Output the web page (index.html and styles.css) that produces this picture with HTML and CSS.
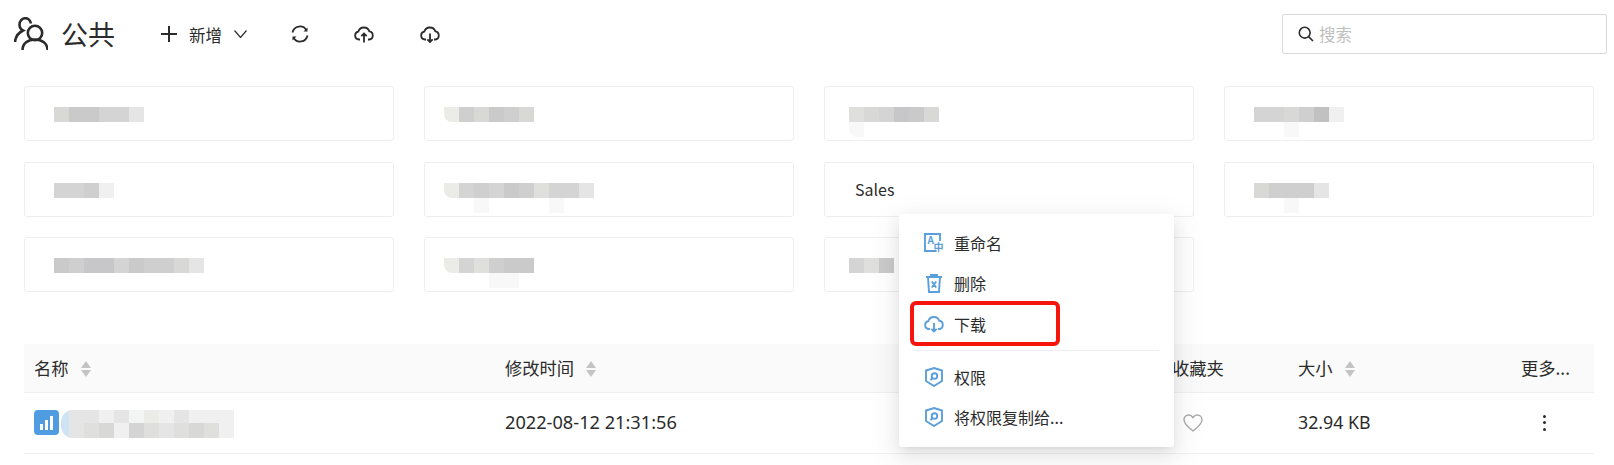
FILE: index.html
```html
<!DOCTYPE html>
<html lang="zh-CN">
<head>
  <meta charset="UTF-8" />
  <meta name="viewport" content="width=device-width, initial-scale=1" />
  <title>公共</title>
  <link rel="stylesheet" href="styles.css">
</head>
<body>

  <header class="toolbar">
    <svg class="space-icon" viewBox="0 0 34 34" fill="none">
      <circle cx="21" cy="16" r="7.2" />
      <path d="M8.5 33c0-6.5 5.5-10.5 12.5-10.5S33.500 26.500 33.500 33" />
      <path d="M17 6.500C16 3 14 1.200 11.500 1.200 8 1.200 5.500 4 5.500 7.500c0 3 1.500 5 3.500 6C5 15.500 1.500 19 1 25" />
    </svg>
    <span class="space-name">公共</span>

    <button class="tool-btn add-btn">
      <svg class="plus-icon" viewBox="0 0 16 16"><path d="M8 0v16M0 8h16" /></svg>
      <span class="add-label">新增</span>
      <svg class="chevron-icon" viewBox="0 0 13 8"><path d="M.5.500 6.500 7.500 12.500.500" /></svg>
    </button>

    <button class="tool-btn refresh-btn">
      <svg class="tool-icon" viewBox="0 0 18 18">
        <path d="M1.500 7.500A7.600 7.600 0 0 1 15.500 5.200" />
        <path d="M16.500 10.500A7.600 7.600 0 0 1 2.500 12.800" />
        <path class="solid" d="M16.500 2.500v4h-4zM1.500 15.500v-4h4z" />
      </svg>
    </button>
    <button class="tool-btn cloud-btn">
      <svg class="cloud-icon" viewBox="0 0 20 17">
        <path d="M6 13.500H5A4 4 0 0 1 4.300 5.600 5.800 5.800 0 0 1 15.300 5.300 4.150 4.150 0 0 1 15.200 13.500H14" />
        <path d="M10 16.500V7.500M7.300 10.200 10 7.500l2.700 2.700" />
      </svg>
    </button>
    <button class="tool-btn cloud-btn">
      <svg class="cloud-icon" viewBox="0 0 20 17">
        <path d="M6 13.500H5A4 4 0 0 1 4.300 5.600 5.800 5.800 0 0 1 15.300 5.300 4.150 4.150 0 0 1 15.200 13.500H14" />
        <path d="M10 7.500v8.500M7.300 13.300 10 16l2.700-2.700" />
      </svg>
    </button>

    <label class="search">
      <svg class="search-icon" viewBox="0 0 16 16"><circle cx="6.700" cy="6.700" r="5.400" /><path d="M10.600 10.600 15 15" /></svg>
      <input type="text" placeholder="搜索">
    </label>
  </header>

  <section class="folders">
    <div class="card">
      <div class="mosaic">
        <div class="px-row"><i class="g6"></i><i class="g3"></i><i class="g3"></i><i class="g5"></i><i class="g5"></i><i class="g8"></i></div>
      </div>
    </div>
    <div class="card">
      <div class="mosaic shift-lg">
        <div class="px-row"><i class="g9 round"></i><i class="g4"></i><i class="g6"></i><i class="g3"></i><i class="g4"></i><i class="g6"></i></div>
      </div>
    </div>
    <div class="card">
      <div class="mosaic shift-sm">
        <div class="px-row"><i class="g7"></i><i class="g6"></i><i class="g5"></i><i class="g2"></i><i class="g3"></i><i class="g6"></i></div>
        <div class="px-row"><i class="g11 round"></i></div>
      </div>
    </div>
    <div class="card">
      <div class="mosaic">
        <div class="px-row"><i class="g5"></i><i class="g5"></i><i class="g6"></i><i class="g4"></i><i class="g1"></i><i class="g10"></i></div>
        <div class="px-row"><i></i><i></i><i class="g11"></i></div>
      </div>
    </div>

    <div class="card">
      <div class="mosaic">
        <div class="px-row"><i class="g5"></i><i class="g5"></i><i class="g4"></i><i class="g10"></i></div>
      </div>
    </div>
    <div class="card">
      <div class="mosaic shift-lg">
        <div class="px-row"><i class="g9 round"></i><i class="g5"></i><i class="g4"></i><i class="g5"></i><i class="g3"></i><i class="g4"></i><i class="g7"></i><i class="g5"></i><i class="g5"></i><i class="g8"></i></div>
        <div class="px-row"><i></i><i></i><i class="g11"></i><i></i><i></i><i></i><i></i><i class="g11"></i></div>
      </div>
    </div>
    <div class="card">
      <span class="card-name">Sales</span>
    </div>
    <div class="card">
      <div class="mosaic">
        <div class="px-row"><i class="g6"></i><i class="g4"></i><i class="g4"></i><i class="g4"></i><i class="g8"></i></div>
        <div class="px-row"><i></i><i></i><i class="g11"></i></div>
      </div>
    </div>

    <div class="card">
      <div class="mosaic">
        <div class="px-row"><i class="g3"></i><i class="g4"></i><i class="g2"></i><i class="g2"></i><i class="g5"></i><i class="g3"></i><i class="g4"></i><i class="g4"></i><i class="g6"></i><i class="g8"></i></div>
      </div>
    </div>
    <div class="card">
      <div class="mosaic shift-lg">
        <div class="px-row"><i class="g9 round"></i><i class="g5"></i><i class="g7"></i><i class="g4"></i><i class="g3"></i><i class="g3"></i></div>
        <div class="px-row"><i></i><i></i><i></i><i class="g11"></i><i class="g11"></i></div>
      </div>
    </div>
    <div class="card">
      <div class="mosaic shift-sm">
        <div class="px-row"><i class="g5"></i><i class="g7"></i><i class="g3"></i></div>
      </div>
    </div>
  </section>

  <table class="files">
    <thead>
      <tr>
        <th class="col-name">名称<span class="sorter"></span></th>
        <th class="col-time">修改时间<span class="sorter"></span></th>
        <th class="col-fav">收藏夹</th>
        <th class="col-size">大小<span class="sorter"></span></th>
        <th class="col-more">更多...</th>
      </tr>
    </thead>
    <tbody>
      <tr>
        <td>
          <div class="file-cell">
            <span class="file-icon">
              <svg viewBox="0 0 25 25"><path d="M6 20v-6h3v6zM11 20V10h3v10zM16 20V6h3v14z" /></svg>
            </span>
            <div class="file-blur">
              <div class="px-row"><i class="g8"></i><i class="g8"></i><i class="g10"></i><i class="g8"></i><i class="g12"></i><i class="g9"></i><i class="g10"></i><i class="g8"></i><i class="g10"></i><i class="g10"></i><i class="g10"></i></div>
              <div class="px-row"><i class="g8"></i><i class="g7"></i><i class="g6"></i><i class="g10"></i><i class="g5"></i><i class="g7"></i><i class="g8"></i><i class="g7"></i><i class="g6"></i><i class="g7"></i><i class="g10"></i></div>
            </div>
          </div>
        </td>
        <td class="cell-time">2022-08-12 21:31:56</td>
        <td>
          <svg class="heart-icon" viewBox="0 0 20 18"><path d="M10 17C4 12.500 1 9.500 1 5.800 1 3 3.200 1 5.700 1 7.500 1 9 2 10 3.500 11 2 12.500 1 14.300 1 16.800 1 19 3 19 5.800 19 9.500 16 12.500 10 17z" /></svg>
        </td>
        <td class="cell-size">32.94 KB</td>
        <td class="more-cell"><span class="dots"><i></i><i></i><i></i></span></td>
      </tr>
    </tbody>
  </table>

  <div class="menu">
    <div class="menu-item">
      <svg class="menu-icon" viewBox="0 0 20 20">
        <path d="M12.500 18H1V1h15v7" />
        <text x="3.500" y="11" class="icon-letter">A</text>
        <text x="9.500" y="18" class="icon-letter">中</text>
      </svg>
      重命名
    </div>
    <div class="menu-item">
      <svg class="menu-icon" viewBox="0 0 20 20">
        <path d="M2 4h16M7 4V2h6v2M4 4l1 15h10l1-15M7.800 8.500l4.400 6M12.200 8.500l-4.400 6" />
      </svg>
      删除
    </div>
    <div class="menu-item menu-marked">
      <svg class="menu-icon" viewBox="0 0 20 17">
        <path d="M6 13.500H5A4 4 0 0 1 4.300 5.600 5.800 5.800 0 0 1 15.300 5.300 4.150 4.150 0 0 1 15.200 13.500H14" />
        <path d="M10 7.500v8.500M7.300 13.300 10 16l2.700-2.700" />
      </svg>
      下载
    </div>
    <div class="menu-divider"></div>
    <div class="menu-item">
      <svg class="menu-icon" viewBox="0 0 18 20">
        <path d="M9 1 17 3.500V14L9 19 1 14V3.500z" />
        <circle cx="9.500" cy="9" r="2.800" />
        <path d="M7.500 11 5.500 13" />
      </svg>
      权限
    </div>
    <div class="menu-item">
      <svg class="menu-icon" viewBox="0 0 18 20">
        <path d="M9 1 17 3.500V14L9 19 1 14V3.500z" />
        <circle cx="9.500" cy="9" r="2.800" />
        <path d="M7.500 11 5.500 13" />
      </svg>
      将权限复制给...
    </div>
  </div>

</body>
</html>
```

FILE: styles.css
```css
* {
  box-sizing: border-box;
}

html, body {
  height: 465px;
  overflow: hidden;
}

body {
  margin: 0;
  background: #fff;
  color: #2b2b2b;
  font-family: "Noto Sans CJK SC", "Noto Sans", sans-serif;
  font-size: 16px;
  position: relative;
}

/* toolbar */
.toolbar {
  display: flex;
  align-items: center;
  height: 68px;
  margin-bottom: 18px;
  padding: 0 7px 0 14px;
}

.space-icon {
  width: 34px;
  height: 34px;
  stroke: #2b2b2b;
  stroke-width: 2.600;
}

.space-name {
  font-size: 27px;
  line-height: 34px;
  margin-left: 13px;
  width: 100px;
}

.tool-btn {
  display: flex;
  align-items: center;
  padding: 0;
  border: none;
  background: none;
  color: inherit;
  font: inherit;
}

.plus-icon {
  width: 16px;
  height: 16px;
  stroke: #2b2b2b;
  stroke-width: 2;
}

.add-label {
  margin-left: 12px;
  font-size: 16.500px;
  line-height: 22px;
  position: relative;
  top: 1px;
}

.chevron-icon {
  width: 13px;
  height: 8px;
  margin-left: 12px;
  fill: none;
  stroke: #2b2b2b;
  stroke-width: 1.200;
}

.refresh-btn {
  margin-left: 44px;
}

.refresh-btn + .cloud-btn {
  margin-left: 45px;
}

.cloud-btn {
  margin-left: 46px;
}

.tool-icon {
  width: 18px;
  height: 18px;
  fill: none;
  stroke: #2b2b2b;
  stroke-width: 1.800;
}

.tool-icon .solid {
  fill: #2b2b2b;
  stroke: none;
}

.cloud-icon {
  width: 20px;
  height: 17px;
  fill: none;
  stroke: #2b2b2b;
  stroke-width: 1.800;
}

.search {
  display: flex;
  align-items: center;
  width: 325px;
  height: 40px;
  margin-left: auto;
  padding-left: 15px;
  border: 1px solid #d9d9d9;
  border-radius: 2px;
}

.search-icon {
  width: 16px;
  height: 16px;
  fill: none;
  stroke: #2b2b2b;
  stroke-width: 1.600;
  flex: none;
}

.search input {
  flex: 1;
  min-width: 0;
  margin-left: 5px;
  padding: 0;
  border: none;
  outline: none;
  font: inherit;
  font-size: 16.500px;
}

.search input::placeholder {
  color: #bfbfbf;
}

/* folder cards */
.folders {
  display: grid;
  grid-template-columns: repeat(4, 370px);
  grid-auto-rows: 55px;
  column-gap: 30px;
  row-gap: 20.500px;
  padding-left: 24px;
}

.card {
  padding: 20px 29px;
  border: 1px solid #eee;
  border-radius: 3px;
  line-height: 15px;
}

.card-name {
  display: block;
  margin-top: -1px;
  padding-left: 1px;
}

.mosaic.shift-lg {
  margin-left: -10px;
}

.mosaic.shift-sm {
  margin-left: -5px;
}

.px-row {
  display: flex;
}

.px-row i {
  width: 15px;
  height: 15px;
}

.g1 { background: #c1c1c1; }
.g2 { background: #c7c7c9; }
.g3 { background: #cacaca; }
.g4 { background: #cfcfcf; }
.g5 { background: #d4d4d4; }
.g6 { background: #d8d8d6; }
.g7 { background: #dfdfdd; }
.g8 { background: #e5e5e5; }
.g9 { background: #ebebe8; }
.g10 { background: #f0f0f1; }
.g11 { background: #f8f8f8; }
.g12 { background: #f3f5f4; }

.px-row i.round {
  border-bottom-left-radius: 8px;
}

/* file table */
.files {
  width: 1570px;
  margin: 52px 0 0 24px;
  border-collapse: collapse;
  table-layout: fixed;
}

.files th {
  height: 48px;
  padding: 0 0 0 10px;
  background: #fafafa;
  border-bottom: 1px solid #f0f0f0;
  text-align: left;
  font-size: 17.300px;
  font-weight: 400;
}

.files td {
  height: 61px;
  padding: 0 0 0 10px;
  border-bottom: 1px solid #f0f0f0;
}

.col-name { width: 471px; }
.col-time { width: 667px; }
.col-fav { width: 126px; }
.col-size { width: 223px; }
.col-more { width: 83px; }

.sorter {
  display: inline-block;
  position: relative;
  width: 10px;
  height: 16px;
  margin-left: 12px;
  vertical-align: -2px;
}

.sorter::before,
.sorter::after {
  content: '';
  position: absolute;
  left: 0;
  border-left: 5px solid transparent;
  border-right: 5px solid transparent;
}

.sorter::before {
  top: 0;
  border-bottom: 7px solid #c4c4c4;
}

.sorter::after {
  bottom: 0;
  border-top: 7px solid #c4c4c4;
}

.files .cell-time {
  padding-bottom: 2px;
  font-family: "Noto Sans", sans-serif;
  font-size: 18.200px;
}

.files .cell-size {
  padding-bottom: 2px;
  font-family: "Noto Sans", sans-serif;
  font-size: 17.800px;
}

.file-cell {
  display: flex;
  align-items: center;
}

.file-icon {
  width: 25px;
  height: 25px;
  border-radius: 4px;
  background: #4f9ce0;
  flex: none;
}

.file-icon svg {
  display: block;
  width: 25px;
  height: 25px;
  fill: #fff;
}

.file-blur {
  margin-left: 2px;
  padding-left: 8px;
  border-radius: 12px 12px 0 12px;
  background: linear-gradient(90deg, #cfe3f5 8px, transparent 8px);
  position: relative;
  top: 1px;
}

.file-blur .px-row:first-child i {
  height: 13px;
}

.heart-icon {
  display: block;
  width: 20px;
  height: 18px;
  margin-left: 11px;
  fill: none;
  stroke: #aaa;
  stroke-width: 1.400;
}

.dots {
  display: flex;
  flex-direction: column;
  gap: 3.500px;
  margin-left: 22px;
  width: 3px;
}

.dots i {
  width: 3px;
  height: 3px;
  border-radius: 50%;
  background: #2b2b2b;
}

/* context menu */
.menu {
  position: absolute;
  left: 899px;
  top: 214px;
  width: 275px;
  height: 233px;
  padding: 9px 15px 0 25px;
  background: #fff;
  border-radius: 3px;
  box-shadow: 0 3px 6px -4px rgba(0, 0, 0, .12), 0 6px 16px 0 rgba(0, 0, 0, .08), 0 9px 28px 8px rgba(0, 0, 0, .05);
}

.menu-item {
  display: flex;
  align-items: center;
  height: 40px;
  position: relative;
}

.menu-icon {
  width: 20px;
  height: 20px;
  margin-right: 10px;
  fill: none;
  stroke: #5a9fdc;
  stroke-width: 1.900;
  flex: none;
}

.icon-letter {
  font-size: 10px;
  font-weight: 700;
  fill: #5a9fdc;
  stroke: none;
}

.menu-marked {
  margin-top: 1px;
}

.menu-marked::after {
  content: '';
  box-sizing: border-box;
  position: absolute;
  left: -14px;
  top: -3px;
  width: 150px;
  height: 45px;
  border: 4px solid #f5150d;
  border-radius: 6px;
}

.menu-divider {
  height: 1px;
  margin: 6px 0 6px -10px;
  background: #eee;
}
```
